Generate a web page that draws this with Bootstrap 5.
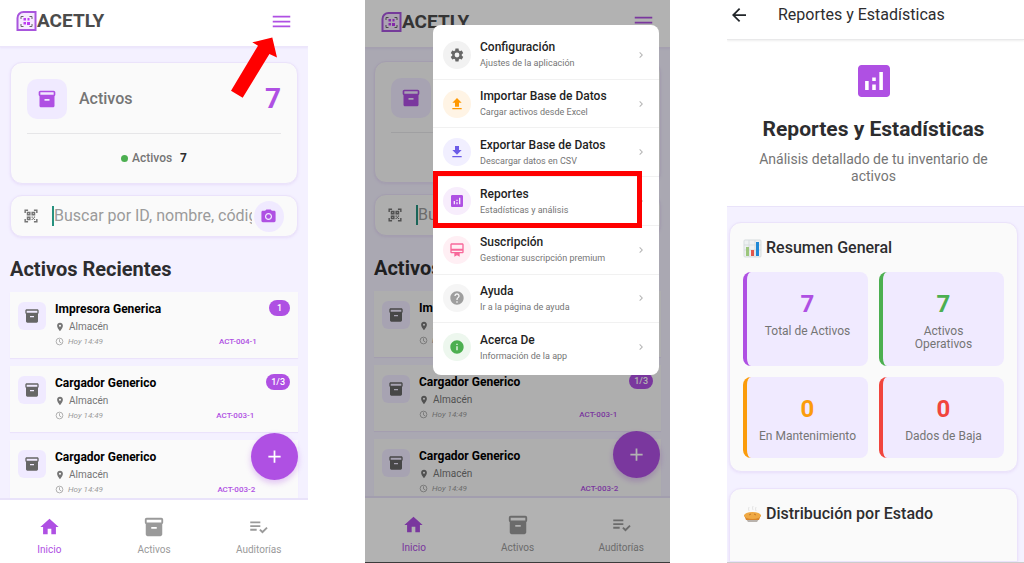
<!DOCTYPE html>
<html lang="es">
<head>
<meta charset="utf-8">
<meta name="viewport" content="width=device-width, initial-scale=1">
<title>Acetly</title>
<link href="https://cdn.jsdelivr.net/npm/bootstrap@5.3.0/dist/css/bootstrap.min.css" rel="stylesheet">
<style>
:root { --violet:#af50e3; --lav:#f4f1ff; --tint:#f0eaff; --ink:#2d2d2f; --soft:#757575; }
body { font-family: Roboto, "Liberation Sans", sans-serif; background:#fff; color:var(--ink); }
svg { fill:currentColor; display:block; flex:none; }
.t8 { font-size:8px; line-height:10px; }
.t9 { font-size:9px; line-height:12px; }
.t10 { font-size:10px; line-height:12px; }
.t12 { font-size:12px; line-height:14px; }
.t16 { font-size:16px; line-height:20px; }
.t20 { font-size:20px; line-height:24px; }
.t24 { font-size:24px; line-height:28px; }
.t28 { font-size:28px; line-height:36px; }
.soft { color:var(--soft); }
.violet { color:var(--violet); }
.medium { font-weight:500; }
.plain { border:0; background:none; padding:0; }

.screens { display:grid; grid-template-columns:308fr 305fr 297fr; column-gap:57px; height:100vh; min-height:563px; }
.screen { background:var(--lav); min-width:0; overflow:hidden; }
.topbar { height:47px; background:#fff; border-bottom:1px solid #ece6fb; box-shadow:0 1px 2px #e9e2fb; padding:0 16px 4px; z-index:1; }
.brand-word { font-weight:700; font-size:19px; line-height:24px; color:#4b4b4b; }
.pane { padding:15px 10px 0; min-height:0; overflow:hidden; position:relative; }
.panel { background:#fafafa; border:1px solid #ebe3fb; border-radius:12px; box-shadow:0 1px 3px #e8defa; }
.summary { padding:16px; height:122px; }
.summary-top { padding-bottom:14px; margin-bottom:17px; border-bottom:1px solid #e6e6e8; }
.tile { background:var(--tint); border-radius:10px; width:40px; height:40px; flex:none; }
.tile-sm { border-radius:6px; width:28px; height:28px; color:#666; margin-top:10px; }
.dot { width:7px; height:7px; border-radius:50%; background:#4caf50; }
.search { margin-top:11px; height:42px; padding:0 13px; gap:14px; }
.search input { border:0; border-left:2px solid #26917f; background:none; padding:0; height:20px; min-width:0; font-size:16px; outline:0; }
.search input::placeholder { color:#9b9b9b; opacity:1; }
.cam { width:31px; height:31px; border-radius:50%; background:var(--tint); color:var(--violet); margin-left:-12px; }
.recent { margin:20px 0 11px; }
.asset { background:#fafafa; height:66px; padding:0 8px; box-shadow:0 1px 1px #ebe3fb; flex:none; }
.asset-body { padding:10px 12px 0 9px; }
.place { margin-top:5px; }
.when { color:#9a9a9a; }
.asset .t8 { margin-top:4px; }
.pill { background:var(--violet); color:#fff; border-radius:8px; height:16px; padding:0 5px; margin-top:8px; font-size:9px; line-height:16px; font-weight:500; }
.pill-one { padding:0 8px; }
.fab { position:absolute; right:10px; bottom:18px; width:47px; height:47px; border-radius:50%; border:0; padding:0; background:var(--violet); color:#fff; box-shadow:0 3px 6px #af50e355; }
.tabs { height:65px; flex:none; background:#fff; border-top:2px solid #e9e3fa; padding-top:16px; margin:0 -3px; z-index:1; }
.tabs a { flex:1; color:#9a9a9a; text-decoration:none; }
.tabs a.here { color:var(--violet); }
.tabs svg { margin:0 auto 6px; }
.pointer { position:absolute; right:31px; top:37px; z-index:3; }

.dimmed .topbar { height:48px; padding-bottom:3px; }
.dimmed .pane { padding:13px 9px 0; }
.dimmed .tabs { height:67px; border-bottom:1px solid #555; }
.scrim { position:absolute; inset:0; background:rgba(0,0,0,.3); z-index:2; }
.sheet { position:absolute; right:11px; top:25px; width:226px; height:350px; background:#fff; border-radius:8px; padding:6px 0 4px; z-index:3; }
.sheet a { flex:1; position:relative; color:#1f1f1f; text-decoration:none; padding:0 12px 0 10px; border-bottom:1px solid #f1f1f1; }
.sheet a:last-child { border-bottom:0; }
.sheet a.marked::after { content:""; position:absolute; inset:-6px 17px -3px 0; border:5px solid #f00; }
.disc { width:28px; height:28px; border-radius:50%; flex:none; }
.entry { padding-left:9px; }
.sub { margin-top:3px; }
.chev { color:#b5b5b5; }
.ico-gray { background:#f2f2f2; color:#666; }
.ico-orange { background:#fff4e5; color:#ff9800; }
.ico-indigo { background:#f1efff; color:#6c5ce7; }
.ico-violet { background:#f7edfc; color:var(--violet); }
.ico-pink { background:#ffeff4; color:#f8689a; }
.ico-help { background:#f5f5f5; color:#9e9e9e; }
.ico-green { background:#edf7ee; color:#4caf50; }

.report { border-bottom:1px solid #ccc; }
.report-bar { height:40px; padding:0 12px 10px 5px; background:#fff; border-bottom:1px solid #e9e9ea; box-shadow:0 1px 2px #eee; z-index:1; }
.report-title { margin-left:32px; }
.hero { background:#fff; padding:25px 30px 20px 26px; border-bottom:1px solid #e9e3fa; height:167px; }
.hero-title { font-size:21px; line-height:24px; margin:20px 0 10px; }
.hero p { font-size:14px; line-height:17px; }
.reports { padding:15px 6px 0 2px; gap:16px; }
.block { border-radius:12px; padding:15px 13px 13px; }
.block-title { margin:0 0 14px; }
.last-block { border-radius:12px 12px 0 0; }
.stats { display:grid; grid-template-columns:1fr 1fr; gap:11px; }
.stat { background:var(--tint); border-radius:8px; border-left:4px solid; padding:18px 11px 15px; text-align:center; }
.stat span { font-size:12px; line-height:13px; margin-top:7px; }
.s-violet { border-color:var(--violet); } .s-violet strong { color:var(--violet); }
.s-green { border-color:#4caf50; } .s-green strong { color:#4caf50; }
.s-orange { border-color:#fb9c0c; } .s-orange strong { color:#fb9c0c; }
.s-red { border-color:#f1453d; } .s-red strong { color:#f1453d; }
</style>
</head>
<body>
<svg width="0" height="0" class="position-absolute" aria-hidden="true">
<defs>
<symbol id="box" viewBox="0 0 24 24"><path d="M20 2H4C3 2 2 2.900 2 4v3.010C2 7.730 2.430 8.350 3 8.700V20c0 1.100 1.100 2 2 2h14c.9 0 2-.9 2-2V8.700c.57-.35 1-.97 1-1.690V4c0-1.100-1-2-2-2zM15 14H9v-2h6v2zM20 7H4V4h16v3z"/></symbol>
<symbol id="home" viewBox="0 0 24 24"><path d="M10 20v-6h4v6h5v-8h3L12 3 2 12h3v8z"/></symbol>
<symbol id="menu" viewBox="0 0 24 24"><path d="M2 18.500h20v-2H2v2zm0-5.500h20v-2H2v2zm0-7.500v2h20v-2H2z"/></symbol>
<symbol id="camera" viewBox="0 0 24 24"><circle cx="12" cy="12" r="3.200"/><path d="M9 2L7.170 4H4c-1.100 0-2 .9-2 2v12c0 1.100.9 2 2 2h16c1.100 0 2-.9 2-2V6c0-1.100-.9-2-2-2h-3.170L15 2H9zm3 15c-2.760 0-5-2.240-5-5s2.240-5 5-5 5 2.240 5 5-2.240 5-5 5z"/></symbol>
<symbol id="place" viewBox="0 0 24 24"><path d="M12 2C8.130 2 5 5.130 5 9c0 5.250 7 13 7 13s7-7.750 7-13c0-3.870-3.130-7-7-7zm0 9.500a2.500 2.500 0 1 1 0-5 2.500 2.500 0 0 1 0 5z"/></symbol>
<symbol id="clock" viewBox="0 0 24 24"><circle cx="12" cy="12" r="9" fill="none" stroke="currentColor" stroke-width="2"/><path d="M12 6v7l5 3" fill="none" stroke="currentColor" stroke-width="2"/></symbol>
<symbol id="checks" viewBox="0 0 24 24"><path d="M3 10h11v2H3zM3 6h11v2H3zM3 14h7v2H3zM20.600 11.900l-4.260 4.270-2.120-2.120-1.410 1.410L16.340 19 22 13.340z"/></symbol>
<symbol id="plus" viewBox="0 0 24 24"><path d="M19 13h-6v6h-2v-6H5v-2h6V5h2v6h6z"/></symbol>
<symbol id="scan" viewBox="0 0 24 24"><path d="M2 7V2h5M17 2h5v5M22 17v5h-5M7 22H2v-5" fill="none" stroke="currentColor" stroke-width="2.500"/><path d="M6 6h4v4H6zM14 6h4v4h-4zM6 14h4v4H6z" fill="none" stroke="currentColor" stroke-width="2.500"/><path d="M13 13h2v2h-2zM15 15h2v2h-2zM17 13h2v2h-2zM13 17h2v2h-2zM17 17h2v2h-2z"/></symbol>
<symbol id="logo" viewBox="0 0 20 20"><path d="M7 1h12v18H1V7a6 6 0 0 1 6-6z" fill="#f6eaff" stroke="#a855dd" stroke-width="2"/><path d="M4.500 8V5.500H7M13 5.500h2.500V8M15.500 13v2.500H13M7 15.500H4.500V13" fill="none" stroke="#666" stroke-width="1"/><path d="M7 7h2.500v2.500H7zM11 7h2v2.500h-2zM7 11h2.500v2.500H7zM10.500 11h3v3h-3z" fill="#bd3cf2"/></symbol>
<symbol id="gear" viewBox="0 0 24 24"><path d="M19.140 12.940c.04-.3.06-.61.06-.94 0-.32-.02-.64-.07-.94l2.030-1.580c.18-.14.23-.41.12-.61l-1.920-3.320c-.12-.22-.37-.29-.59-.22l-2.390.96c-.5-.38-1.030-.7-1.620-.94l-.36-2.540c-.04-.24-.24-.41-.48-.41h-3.840c-.24 0-.43.17-.47.41l-.36 2.540c-.59.24-1.130.57-1.620.94l-2.390-.96c-.22-.08-.47 0-.59.22L2.740 8.870c-.12.21-.08.47.12.61l2.030 1.580c-.05.3-.09.63-.09.94s.02.64.07.94l-2.030 1.580c-.18.14-.23.41-.12.61l1.920 3.320c.12.22.37.29.59.22l2.390-.96c.5.38 1.030.7 1.620.94l.36 2.540c.05.24.24.41.48.41h3.840c.24 0 .44-.17.47-.41l.36-2.540c.59-.24 1.130-.56 1.620-.94l2.390.96c.22.08.47 0 .59-.22l1.920-3.320c.12-.22.07-.47-.12-.61l-2.010-1.580zM12 15.600a3.600 3.600 0 1 1 0-7.200 3.600 3.600 0 0 1 0 7.200z"/></symbol>
<symbol id="up" viewBox="0 0 24 24"><path d="M5 20h14v-2H5v2zm0-10h4v6h6v-6h4l-7-7-7 7z"/></symbol>
<symbol id="down" viewBox="0 0 24 24"><path d="M5 20h14v-2H5v2zM19 9h-4V3H9v6H5l7 7 7-7z"/></symbol>
<symbol id="chart" viewBox="3 3 18 18"><path d="M19 3H5c-1.100 0-2 .9-2 2v14c0 1.100.9 2 2 2h14c1.100 0 2-.9 2-2V5c0-1.100-.9-2-2-2zM9 17H7v-5h2v5zm4 0h-2v-3h2v3zm0-5h-2v-2h2v2zm4 5h-2V7h2v10z"/></symbol>
<symbol id="member" viewBox="0 0 24 24"><path d="M20 2H4c-1.110 0-2 .89-2 2v11c0 1.110.89 2 2 2h4v5l4-2 4 2v-5h4c1.110 0 2-.89 2-2V4c0-1.110-.89-2-2-2zm0 13H4v-2h16v2zm0-5H4V4h16v6z"/></symbol>
<symbol id="help" viewBox="0 0 24 24"><path d="M12 2C6.480 2 2 6.480 2 12s4.480 10 10 10 10-4.480 10-10S17.520 2 12 2zm1 17h-2v-2h2v2zm2.070-7.750l-.9.92C13.450 12.900 13 13.500 13 15h-2v-.5c0-1.100.45-2.100 1.170-2.830l1.240-1.260c.37-.36.59-.86.59-1.410 0-1.100-.9-2-2-2s-2 .9-2 2H8c0-2.210 1.790-4 4-4s4 1.790 4 4c0 .88-.36 1.680-.93 2.250z"/></symbol>
<symbol id="info" viewBox="0 0 24 24"><path d="M12 2C6.480 2 2 6.480 2 12s4.480 10 10 10 10-4.480 10-10S17.520 2 12 2zm1 15h-2v-6h2v6zm0-8h-2V7h2v2z"/></symbol>
<symbol id="next" viewBox="0 0 24 24"><path d="M10 6L8.590 7.410 13.170 12l-4.580 4.590L10 18l6-6z"/></symbol>
<symbol id="back" viewBox="4 4 16 16"><path d="M20 11H7.830l5.590-5.590L12 4l-8 8 8 8 1.410-1.410L7.830 13H20v-2z"/></symbol>
</defs>
</svg>

<div class="screens">
  <section class="screen position-relative d-flex flex-column">
    <header class="topbar d-flex align-items-center justify-content-between flex-shrink-0">
      <div class="d-flex align-items-center"><svg width="21" height="20"><use href="#logo"/></svg><span class="brand-word">ACETLY</span></div>
      <button class="plain violet" aria-label="Menú"><svg width="21" height="21"><use href="#menu"/></svg></button>
    </header>
    <svg class="pointer" width="47" height="62" viewBox="230 37 47 62"><path fill="#f00" d="M272.300 37.600L277 57.400 269.400 54 242.700 97.700 231 90.700 258 45.700 252.300 42.300z"/></svg>
    <main class="pane d-flex flex-column flex-grow-1">
      <div class="panel summary flex-shrink-0">
        <div class="summary-top d-flex align-items-center">
          <div class="tile violet d-flex align-items-center justify-content-center"><svg width="20" height="20"><use href="#box"/></svg></div>
          <span class="t16 soft medium ms-2 ps-1 flex-grow-1">Activos</span><strong class="t28 violet">7</strong>
        </div>
        <div class="d-flex align-items-center justify-content-center t12"><i class="dot me-1"></i><span class="soft medium me-1">Activos</span><strong class="ps-1">7</strong></div>
      </div>
      <div class="panel search d-flex align-items-center flex-shrink-0">
        <svg class="soft" width="14" height="14"><use href="#scan"/></svg>
        <input class="flex-grow-1" type="text" aria-label="Buscar" placeholder="Buscar por ID, nombre, código">
        <button class="plain cam d-flex align-items-center justify-content-center" aria-label="Cámara"><svg width="17" height="17"><use href="#camera"/></svg></button>
      </div>
      <h2 class="recent t20 fw-bold flex-shrink-0">Activos Recientes</h2>
      <div class="d-flex flex-column gap-2">
        <article class="asset d-flex">
          <div class="tile tile-sm d-flex align-items-center justify-content-center"><svg width="16" height="16"><use href="#box"/></svg></div>
          <div class="asset-body flex-grow-1"><h3 class="t12 fw-bold text-black m-0">Impresora Generica</h3>
            <div class="t10 soft d-flex align-items-center gap-1 place"><svg width="10" height="10"><use href="#place"/></svg>Almacén</div>
            <div class="t8 d-flex justify-content-between"><em class="d-flex gap-1 when"><svg width="9" height="9"><use href="#clock"/></svg>Hoy 14:49</em><b class="violet medium">ACT-004-1</b></div></div>
          <span class="pill pill-one align-self-start">1</span>
        </article>
        <article class="asset d-flex">
          <div class="tile tile-sm d-flex align-items-center justify-content-center"><svg width="16" height="16"><use href="#box"/></svg></div>
          <div class="asset-body flex-grow-1"><h3 class="t12 fw-bold text-black m-0">Cargador Generico</h3>
            <div class="t10 soft d-flex align-items-center gap-1 place"><svg width="10" height="10"><use href="#place"/></svg>Almacén</div>
            <div class="t8 d-flex justify-content-between"><em class="d-flex gap-1 when"><svg width="9" height="9"><use href="#clock"/></svg>Hoy 14:49</em><b class="violet medium">ACT-003-1</b></div></div>
          <span class="pill align-self-start">1/3</span>
        </article>
        <article class="asset d-flex">
          <div class="tile tile-sm d-flex align-items-center justify-content-center"><svg width="16" height="16"><use href="#box"/></svg></div>
          <div class="asset-body flex-grow-1"><h3 class="t12 fw-bold text-black m-0">Cargador Generico</h3>
            <div class="t10 soft d-flex align-items-center gap-1 place"><svg width="10" height="10"><use href="#place"/></svg>Almacén</div>
            <div class="t8 d-flex justify-content-between"><em class="d-flex gap-1 when"><svg width="9" height="9"><use href="#clock"/></svg>Hoy 14:49</em><b class="violet medium">ACT-003-2</b></div></div>
          <span class="pill px-2 align-self-start">&nbsp;&nbsp;&nbsp;</span>
        </article>
      </div>
      <button class="fab d-flex align-items-center justify-content-center" aria-label="Añadir"><svg width="21" height="21"><use href="#plus"/></svg></button>
    </main>
    <nav class="tabs d-flex text-center t10">
      <a class="here" href="#"><svg width="23" height="22"><use href="#home"/></svg>Inicio</a>
      <a href="#"><svg width="22" height="22"><use href="#box"/></svg>Activos</a>
      <a href="#"><svg width="23" height="22"><use href="#checks"/></svg>Auditorías</a>
    </nav>
  </section>

  <section class="screen dimmed position-relative d-flex flex-column">
    <header class="topbar d-flex align-items-center justify-content-between flex-shrink-0">
      <div class="d-flex align-items-center"><svg width="21" height="20"><use href="#logo"/></svg><span class="brand-word">ACETLY</span></div>
      <button class="plain violet" aria-label="Menú"><svg width="21" height="21"><use href="#menu"/></svg></button>
    </header>
    <main class="pane d-flex flex-column flex-grow-1">
      <div class="panel summary flex-shrink-0">
        <div class="summary-top d-flex align-items-center">
          <div class="tile violet d-flex align-items-center justify-content-center"><svg width="20" height="20"><use href="#box"/></svg></div>
        </div>
      </div>
      <div class="panel search d-flex align-items-center flex-shrink-0">
        <svg class="soft" width="14" height="14"><use href="#scan"/></svg>
        <input class="flex-grow-1" type="text" aria-label="Buscar" placeholder="Buscar">
      </div>
      <h2 class="recent t20 fw-bold flex-shrink-0">Activos</h2>
      <div class="d-flex flex-column gap-2">
        <article class="asset d-flex">
          <div class="tile tile-sm d-flex align-items-center justify-content-center"><svg width="16" height="16"><use href="#box"/></svg></div>
          <div class="asset-body flex-grow-1"><h3 class="t12 fw-bold text-black m-0">Im</h3>
            <div class="t10 soft d-flex align-items-center gap-1 place"><svg width="10" height="10"><use href="#place"/></svg>A</div>
            <div class="t8 d-flex justify-content-between"><em class="d-flex gap-1 when"><svg width="9" height="9"><use href="#clock"/></svg>H</em></div></div>
        </article>
        <article class="asset d-flex">
          <div class="tile tile-sm d-flex align-items-center justify-content-center"><svg width="16" height="16"><use href="#box"/></svg></div>
          <div class="asset-body flex-grow-1"><h3 class="t12 fw-bold text-black m-0">Cargador Generico</h3>
            <div class="t10 soft d-flex align-items-center gap-1 place"><svg width="10" height="10"><use href="#place"/></svg>Almacén</div>
            <div class="t8 d-flex justify-content-between"><em class="d-flex gap-1 when"><svg width="9" height="9"><use href="#clock"/></svg>Hoy 14:49</em><b class="violet medium">ACT-003-1</b></div></div>
          <span class="pill align-self-start">1/3</span>
        </article>
        <article class="asset d-flex">
          <div class="tile tile-sm d-flex align-items-center justify-content-center"><svg width="16" height="16"><use href="#box"/></svg></div>
          <div class="asset-body flex-grow-1"><h3 class="t12 fw-bold text-black m-0">Cargador Generico</h3>
            <div class="t10 soft d-flex align-items-center gap-1 place"><svg width="10" height="10"><use href="#place"/></svg>Almacén</div>
            <div class="t8 d-flex justify-content-between"><em class="d-flex gap-1 when"><svg width="9" height="9"><use href="#clock"/></svg>Hoy 14:49</em><b class="violet medium">ACT-003-2</b></div></div>
          <span class="pill px-2 align-self-start">&nbsp;&nbsp;&nbsp;</span>
        </article>
      </div>
      <button class="fab d-flex align-items-center justify-content-center" aria-label="Añadir"><svg width="21" height="21"><use href="#plus"/></svg></button>
    </main>
    <nav class="tabs d-flex text-center t10">
      <a class="here" href="#"><svg width="23" height="22"><use href="#home"/></svg>Inicio</a>
      <a href="#"><svg width="22" height="22"><use href="#box"/></svg>Activos</a>
      <a href="#"><svg width="23" height="22"><use href="#checks"/></svg>Auditorías</a>
    </nav>
    <div class="scrim"></div>
    <nav class="sheet d-flex flex-column" aria-label="Opciones">
      <a class="d-flex align-items-center" href="#"><span class="disc d-flex align-items-center justify-content-center ico-gray"><svg width="16" height="16"><use href="#gear"/></svg></span><span class="entry flex-grow-1"><span class="t12 medium d-block">Configuración</span><span class="sub t9 soft d-block">Ajustes de la aplicación</span></span><svg class="chev" width="12" height="12"><use href="#next"/></svg></a>
      <a class="d-flex align-items-center" href="#"><span class="disc d-flex align-items-center justify-content-center ico-orange"><svg width="16" height="16"><use href="#up"/></svg></span><span class="entry flex-grow-1"><span class="t12 medium d-block">Importar Base de Datos</span><span class="sub t9 soft d-block">Cargar activos desde Excel</span></span><svg class="chev" width="12" height="12"><use href="#next"/></svg></a>
      <a class="d-flex align-items-center" href="#"><span class="disc d-flex align-items-center justify-content-center ico-indigo"><svg width="16" height="16"><use href="#down"/></svg></span><span class="entry flex-grow-1"><span class="t12 medium d-block">Exportar Base de Datos</span><span class="sub t9 soft d-block">Descargar datos en CSV</span></span><svg class="chev" width="12" height="12"><use href="#next"/></svg></a>
      <a class="marked d-flex align-items-center" href="#"><span class="disc d-flex align-items-center justify-content-center ico-violet"><svg width="12" height="12"><use href="#chart"/></svg></span><span class="entry flex-grow-1"><span class="t12 medium d-block">Reportes</span><span class="sub t9 soft d-block">Estadísticas y análisis</span></span><svg class="chev" width="12" height="12"><use href="#next"/></svg></a>
      <a class="d-flex align-items-center" href="#"><span class="disc d-flex align-items-center justify-content-center ico-pink"><svg width="16" height="16"><use href="#member"/></svg></span><span class="entry flex-grow-1"><span class="t12 medium d-block">Suscripción</span><span class="sub t9 soft d-block">Gestionar suscripción premium</span></span><svg class="chev" width="12" height="12"><use href="#next"/></svg></a>
      <a class="d-flex align-items-center" href="#"><span class="disc d-flex align-items-center justify-content-center ico-help"><svg width="16" height="16"><use href="#help"/></svg></span><span class="entry flex-grow-1"><span class="t12 medium d-block">Ayuda</span><span class="sub t9 soft d-block">Ir a la página de ayuda</span></span><svg class="chev" width="12" height="12"><use href="#next"/></svg></a>
      <a class="d-flex align-items-center" href="#"><span class="disc d-flex align-items-center justify-content-center ico-green"><svg width="16" height="16"><use href="#info"/></svg></span><span class="entry flex-grow-1"><span class="t12 medium d-block">Acerca De</span><span class="sub t9 soft d-block">Información de la app</span></span><svg class="chev" width="12" height="12"><use href="#next"/></svg></a>
    </nav>
  </section>

  <section class="screen d-flex flex-column report">
    <header class="report-bar d-flex align-items-center flex-shrink-0">
      <button class="plain text-dark" aria-label="Volver"><svg width="14" height="14"><use href="#back"/></svg></button>
      <span class="t16 report-title">Reportes y Estadísticas</span>
    </header>
    <div class="hero text-center flex-shrink-0">
      <svg class="violet mx-auto" width="32" height="32"><use href="#chart"/></svg>
      <h1 class="hero-title fw-bold">Reportes y Estadísticas</h1>
      <p class="soft m-0">Análisis detallado de tu inventario de activos</p>
    </div>
    <main class="reports d-flex flex-column flex-grow-1">
      <section class="panel block flex-shrink-0">
        <h2 class="t16 medium d-flex align-items-center gap-1 block-title"><svg width="19" height="19" viewBox="0 0 19 19"><rect x="1" y="1" width="17" height="17" rx="1" fill="#eef1f2" stroke="#d7dddf"/><path d="M1 6h17M1 11h17M6 1v17M12 1v17" stroke="#d7dddf"/><path fill="#9cc67c" d="M3 8h3v9H3z"/><path fill="#e2574c" d="M8 11h3v6H8z"/><path fill="#1e88d6" d="M13 3h3v14h-3z"/></svg>Resumen General</h2>
        <div class="stats">
          <div class="stat s-violet"><strong class="t24 d-block">7</strong><span class="soft d-block">Total de Activos</span></div>
          <div class="stat s-green"><strong class="t24 d-block">7</strong><span class="soft d-block">Activos Operativos</span></div>
          <div class="stat s-orange"><strong class="t24 d-block">0</strong><span class="soft d-block">En Mantenimiento</span></div>
          <div class="stat s-red"><strong class="t24 d-block">0</strong><span class="soft d-block">Dados de Baja</span></div>
        </div>
      </section>
      <section class="panel block flex-grow-1 last-block">
        <h2 class="t16 medium d-flex align-items-center gap-1 block-title"><svg width="19" height="19" viewBox="0 0 19 19"><path d="M6 6q-1-2 0-4M10 5q-1-2 0-4M13 6q-1-2 0-4" fill="none" stroke="#e4e4e4"/><path fill="#b9b3ae" d="M3 14h13l-2 3H5z"/><path fill="#d9862b" d="M1 10h17l-2 5H3z"/><ellipse cx="9.500" cy="10.500" rx="8.500" ry="3.500" fill="#efa944"/><path d="M6 10l2-1M11 9l2 1" stroke="#c77a28"/></svg>Distribución por Estado</h2>
      </section>
    </main>
  </section>
</div>
<script src="https://cdn.jsdelivr.net/npm/bootstrap@5.3.0/dist/js/bootstrap.bundle.min.js"></script>
</body>
</html>
